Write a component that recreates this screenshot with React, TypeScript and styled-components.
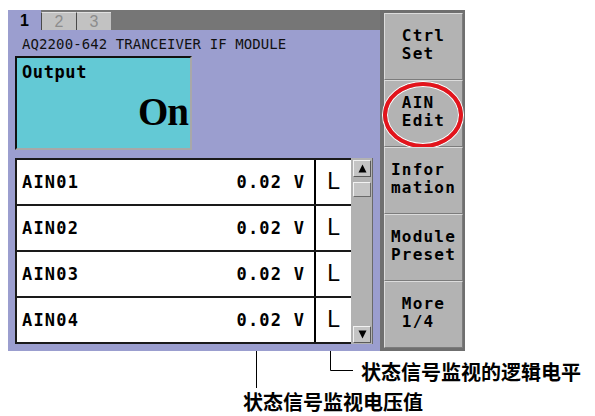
import styled, { createGlobalStyle } from 'styled-components';

const Global = createGlobalStyle`
  html, body {
    margin: 0;
    padding: 0;
    background: #ffffff;
  }
`;

const LAVENDER = '#9b9ecf';
const MONO = `"DejaVu Sans Mono", "Liberation Mono", monospace`;

const rows = [
  { id: 1, name: 'AIN01', value: '0.02 V', level: 'L' },
  { id: 2, name: 'AIN02', value: '0.02 V', level: 'L' },
  { id: 3, name: 'AIN03', value: '0.02 V', level: 'L' },
  { id: 4, name: 'AIN04', value: '0.02 V', level: 'L' },
];

const softkeys = [
  { id: 1, lines: ['Ctrl', 'Set '] },
  { id: 2, lines: ['AIN ', 'Edit'], marked: true },
  { id: 3, lines: ['Infor ', 'mation'] },
  { id: 4, lines: ['Module', 'Preset'] },
  { id: 5, lines: ['More', '1/4 '] },
];

export default function App() {
  return (
    <Page>
      <Global />
      <Screen>
        <LeftPane>
          <TabBar>
            <Tab active>1</Tab>
            <Tab>2</Tab>
            <Tab>3</Tab>
          </TabBar>
          <Panel>
            <Title>AQ2200-642 TRANCEIVER IF MODULE</Title>
            <OutputBox>
              <OutputLabel>Output</OutputLabel>
              <OutputValue>On</OutputValue>
            </OutputBox>
            <ListArea>
              <List>
                {rows.map((r) => (
                  <Row key={r.id}>
                    <NameCell>{r.name}</NameCell>
                    <ValueCell>{r.value}</ValueCell>
                    <LevelCell>{r.level}</LevelCell>
                  </Row>
                ))}
              </List>
              <ScrollBar>
                <ScrollButton>
                  <svg width="9" height="9" viewBox="0 0 9 9">
                    <polygon points="4.5,0.5 8.5,8.5 0.5,8.5" fill="#000" />
                  </svg>
                </ScrollButton>
                <Thumb />
                <ScrollGap />
                <ScrollButton>
                  <svg width="9" height="9" viewBox="0 0 9 9">
                    <polygon points="0.5,0.5 8.5,0.5 4.5,8.5" fill="#000" />
                  </svg>
                </ScrollButton>
              </ScrollBar>
            </ListArea>
          </Panel>
        </LeftPane>
        <SoftkeyColumn>
          {softkeys.map((k) => (
            <Softkey key={k.id}>
              {k.lines.map((l) => (
                <KeyLine key={l}>{l}</KeyLine>
              ))}
              {k.marked && <Mark />}
            </Softkey>
          ))}
        </SoftkeyColumn>
      </Screen>
      <Notes>
        <svg width="595" height="65" style={{ position: 'absolute', left: 0, top: 0 }}>
          <line x1="256.5" y1="-21" x2="256.5" y2="37" stroke="#000" strokeWidth="1" />
          <polyline points="330.5,-14 330.5,19.5 353,19.5" fill="none" stroke="#000" strokeWidth="1" />
        </svg>
        <Note left={361} top={10}>状态信号监视的逻辑电平</Note>
        <Note left={243} top={40}>状态信号监视电压值</Note>
      </Notes>
    </Page>
  );
}

const Page = styled.div`
  width: 595px;
  height: 416px;
  padding: 10px 0 0 8px;
  box-sizing: border-box;
  overflow: hidden;
`;

const Screen = styled.div`
  display: flex;
  width: 457px;
  height: 341px;
`;

const LeftPane = styled.div`
  width: 372px;
  display: flex;
  flex-direction: column;
`;

const TabBar = styled.div`
  height: 20px;
  background: #767676;
  display: flex;
  align-items: flex-end;
`;

const Tab = styled.div<{ active?: boolean }>`
  box-sizing: border-box;
  width: ${({ active }) => (active ? '33px' : '35px')};
  height: ${({ active }) => (active ? '20px' : '18px')};
  display: flex;
  align-items: center;
  justify-content: center;
  font-family: "Liberation Sans", Arial, sans-serif;
  font-size: 16px;
  font-weight: ${({ active }) => (active ? 700 : 400)};
  color: ${({ active }) => (active ? '#000' : '#8c8c8c')};
  background: ${({ active }) => (active ? LAVENDER : '#c2c2c2')};
  border-left: ${({ active }) => (active ? 'none' : '1px solid #4a4a4a')};
  border-top: ${({ active }) => (active ? 'none' : '1px solid #e0e0e0')};
  padding-top: 1px;
`;

const Panel = styled.div`
  flex: 1;
  background: ${LAVENDER};
  padding: 7px 7px 0 7px;
  display: flex;
  flex-direction: column;
`;

const Title = styled.div`
  font-family: ${MONO};
  font-size: 14px;
  line-height: 14px;
  color: #111;
  padding-left: 7px;
  letter-spacing: 0.1px;
`;

const OutputBox = styled.div`
  margin-top: 5px;
  width: 177px;
  height: 94px;
  box-sizing: border-box;
  background: #63c9d5;
  border-top: 2px solid #111;
  border-left: 2px solid #111;
  border-right: 2px solid #a8a8a8;
  border-bottom: 2px solid #a8a8a8;
  display: flex;
  flex-direction: column;
  padding: 4px 2px 0 5px;
`;

const OutputLabel = styled.div`
  font-family: ${MONO};
  font-size: 17px;
  font-weight: 700;
  letter-spacing: 0.6px;
  line-height: 20px;
  color: #000;
`;

const OutputValue = styled.div`
  font-family: "Liberation Serif", "Times New Roman", serif;
  font-size: 39px;
  font-weight: 700;
  line-height: 40px;
  text-align: right;
  margin-top: 10px;
  color: #000;
  letter-spacing: -1px;
`;

const ListArea = styled.div`
  margin-top: 8px;
  display: flex;
  align-items: flex-start;
`;

const List = styled.div`
  width: 337px;
  border-top: 2px solid #1a1a1a;
  border-left: 2px solid #1a1a1a;
  box-sizing: border-box;
  display: flex;
  flex-direction: column;
`;

const Row = styled.div`
  height: 46px;
  box-sizing: border-box;
  border-bottom: 2px solid #1a1a1a;
  background: #ffffff;
  display: flex;
  align-items: center;
  font-family: ${MONO};
  font-size: 17px;
  font-weight: 700;
  letter-spacing: 1.2px;
  color: #000;
`;

const NameCell = styled.div`
  padding-left: 5px;
  flex: 0 0 140px;
`;

const ValueCell = styled.div`
  flex: 1;
  padding-right: 9px;
  align-self: stretch;
  display: flex;
  align-items: center;
  justify-content: flex-end;
  border-right: 2px solid #000;
`;

const LevelCell = styled.div`
  width: 35px;
  text-align: center;
  font-family: "Liberation Sans", Arial, sans-serif;
  font-weight: 400;
  font-size: 23px;
  letter-spacing: 0;
  padding-bottom: 2px;
`;

const ScrollBar = styled.div`
  width: 22px;
  height: 186px;
  box-sizing: border-box;
  background: #b2b2b2;
  border-right: 1px solid #6a6a6a;
  display: flex;
  flex-direction: column;
  align-items: center;
  padding: 2px 0 1px 1px;
`;

const ScrollButton = styled.div`
  width: 18px;
  height: 17px;
  box-sizing: border-box;
  background: #c4c4c4;
  border-top: 1px solid #f2f2f2;
  border-left: 1px solid #f2f2f2;
  border-right: 1px solid #5a5a5a;
  border-bottom: 1px solid #5a5a5a;
  display: flex;
  align-items: center;
  justify-content: center;
`;

const Thumb = styled.div`
  margin-top: 5px;
  width: 18px;
  height: 15px;
  box-sizing: border-box;
  background: #c4c4c4;
  border-top: 1px solid #f2f2f2;
  border-left: 1px solid #f2f2f2;
  border-right: 1px solid #6a6a6a;
  border-bottom: 1px solid #6a6a6a;
`;

const ScrollGap = styled.div`
  flex: 1;
`;

const SoftkeyColumn = styled.div`
  width: 85px;
  background: #6f6f6f;
  box-sizing: border-box;
  padding: 3px 2px 3px 4px;
  display: flex;
  flex-direction: column;
`;

const Softkey = styled.div`
  position: relative;
  flex: 1;
  box-sizing: border-box;
  background: #b3b3b3;
  border-top: 1px solid #dcdcdc;
  border-left: 1px solid #dcdcdc;
  border-right: 1px solid #7c7c7c;
  border-bottom: 1px solid #7c7c7c;
  display: flex;
  flex-direction: column;
  align-items: center;
  justify-content: center;
  gap: 1px;
  padding-bottom: 4px;
`;

const KeyLine = styled.div`
  font-family: ${MONO};
  font-size: 16px;
  font-weight: 700;
  letter-spacing: 1.2px;
  line-height: 17px;
  color: #000;
  white-space: pre;
`;

const Mark = styled.span`
  position: absolute;
  left: -2px;
  right: -1px;
  top: 1px;
  bottom: -2px;
  border: 4px solid #e3141c;
  border-radius: 50%;
  box-shadow: 0 0 0 1px #ffffff, inset 0 0 0 1px #ffffff;
`;

const Notes = styled.div`
  position: relative;
  margin-left: -8px;
  height: 65px;
`;

const Note = styled.div<{ left: number; top: number }>`
  position: absolute;
  left: ${({ left }) => left}px;
  top: ${({ top }) => top}px;
  font-family: "Noto Sans CJK SC", "Noto Sans", sans-serif;
  font-size: 20px;
  font-weight: 700;
  line-height: 21px;
  color: #000;
  white-space: nowrap;
`;
